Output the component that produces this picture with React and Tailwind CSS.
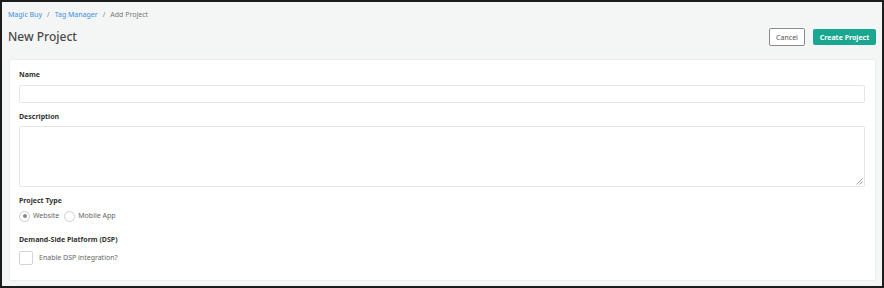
import React from "react";

export default function App() {
  const font = { fontFamily: '"Noto Sans", "Open Sans", sans-serif' };
  return (
    <div
      className="w-[884px] h-[288px] box-border border-2 border-[#1c1c1c] bg-[#f4f5f5] px-[6px] pt-[7px] flex flex-col"
      style={font}
    >
      <div className="flex items-center gap-[5px] text-[7px] leading-[12px] h-[12px]">
        <span className="text-[#3a8ee6]">Magic Buy</span>
        <span className="text-[#888]">/</span>
        <span className="text-[#3a8ee6]">Tag Manager</span>
        <span className="text-[#888]">/</span>
        <span className="text-[#777]">Add Project</span>
      </div>
      <div className="flex items-center justify-between mt-[7px] h-[18px]">
        <h1 className="text-[12px] leading-[18px] text-[#4a4a4a] font-medium">New Project</h1>
        <div className="flex items-center gap-[8px]">
          <button className="h-[18px] w-[36px] box-border border border-[#8c8c8c] rounded-[2px] bg-white text-[7px] text-[#555] leading-none">
            Cancel
          </button>
          <button className="h-[16px] w-[63px] rounded-[2px] bg-[#19a88f] text-white text-[7px] font-bold leading-none">
            Create Project
          </button>
        </div>
      </div>
      <div className="mt-[13px] ml-[1px] w-[867px] h-[222px] box-border bg-white border border-[#ececec] rounded-[2px] pl-[9px] pr-[10px] pt-[9px] flex flex-col">
        <label className="text-[7px] leading-[12px] font-bold text-[#333]">Name</label>
        <div className="mt-[4px] h-[18px] box-border border border-[#e6e6e6] rounded-[2px]" />
        <label className="mt-[8px] text-[7px] leading-[12px] font-bold text-[#333]">Description</label>
        <div className="mt-[3px] h-[61px] box-border border border-[#e6e6e6] rounded-[2px] relative">
          <svg className="absolute right-[1px] bottom-[1px]" width="7" height="7" viewBox="0 0 7 7">
            <line x1="6.5" y1="0.5" x2="0.5" y2="6.5" stroke="#888" strokeWidth="0.8" />
            <line x1="6.5" y1="3.5" x2="3.5" y2="6.5" stroke="#888" strokeWidth="0.8" />
          </svg>
        </div>
        <label className="mt-[8px] text-[7px] leading-[12px] font-bold text-[#333]">Project Type</label>
        <div className="mt-[3px] flex items-center h-[12px] text-[7px] text-[#666]">
          <span className="w-[11px] h-[11px] box-border rounded-full border border-[#cfcfcf] flex items-center justify-center">
            <span className="w-[4px] h-[4px] rounded-full bg-[#8a8a8a]" />
          </span>
          <span className="ml-[3px]">Website</span>
          <span className="ml-[5px] w-[11px] h-[11px] box-border rounded-full border border-[#cfcfcf]" />
          <span className="ml-[3px]">Mobile App</span>
        </div>
        <label className="mt-[12px] text-[7px] leading-[12px] font-bold text-[#333]">Demand-Side Platform (DSP)</label>
        <div className="mt-[5px] flex items-center h-[14px] text-[7px] text-[#666]">
          <span className="w-[14px] h-[14px] box-border rounded-[2px] border border-[#d4d4d4]" />
          <span className="ml-[6px]">Enable DSP integration?</span>
        </div>
      </div>
    </div>
  );
}
